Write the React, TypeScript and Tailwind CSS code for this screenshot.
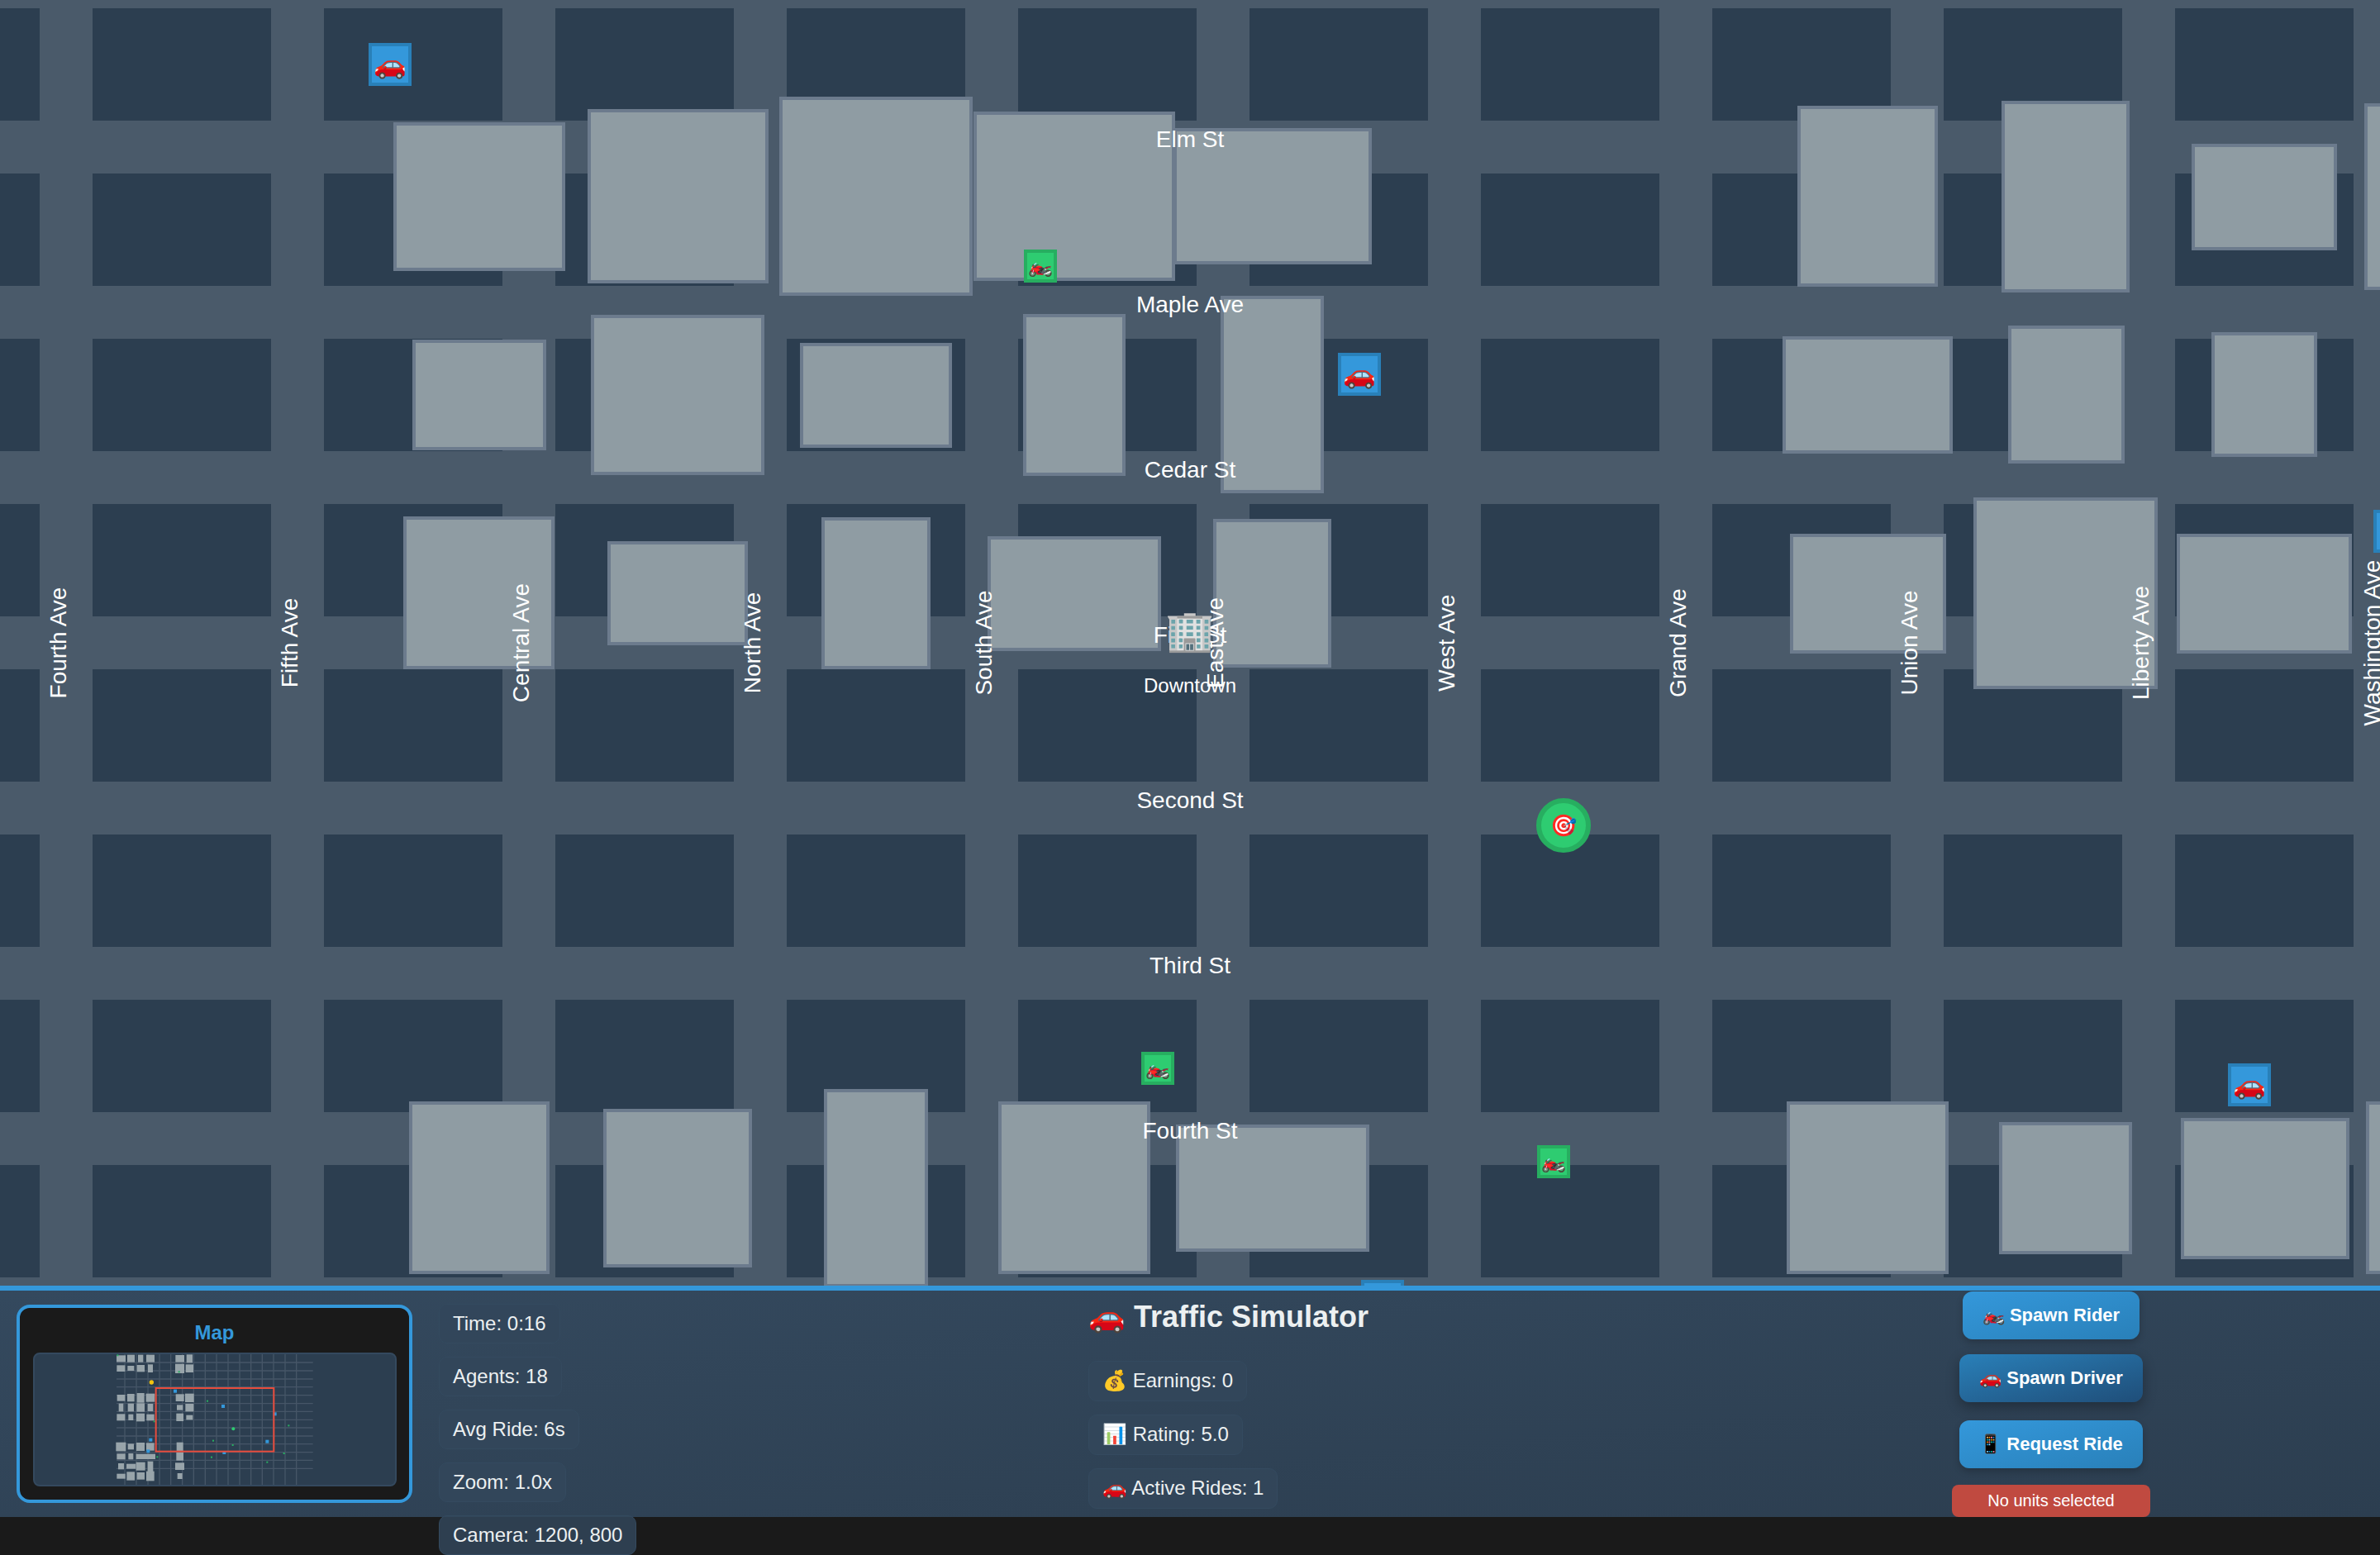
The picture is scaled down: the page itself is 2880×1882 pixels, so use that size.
import React from "react";

const cols = Array.from({ length: 11 });
const rows = Array.from({ length: 8 });

// [x, y, w, h]
const buildings: number[][] = [
  [476, 148, 208, 180], [711, 132, 219, 211], [943, 117, 234, 241], [1178, 135, 244, 205], [1420, 155, 240, 165],
  [2175, 128, 170, 219], [2422, 122, 155, 232], [2652, 174, 176, 129], [2861, 125, 180, 226],
  [499, 411, 162, 134], [715, 381, 210, 194], [968, 415, 184, 127], [1238, 380, 124, 196], [1477, 358, 125, 239],
  [2157, 407, 206, 142], [2430, 394, 141, 167], [2676, 402, 128, 151],
  [488, 625, 183, 185], [735, 655, 170, 126], [994, 626, 132, 184], [1195, 649, 210, 139], [1468, 628, 143, 180],
  [2166, 646, 189, 145], [2388, 602, 223, 232], [2634, 646, 212, 145],
  [495, 1333, 170, 209], [730, 1342, 180, 192], [997, 1318, 126, 240], [1208, 1333, 184, 209], [1423, 1361, 234, 154],
  [2162, 1333, 196, 209], [2419, 1358, 161, 160], [2639, 1353, 204, 171], [2863, 1333, 180, 209],
];

const hLabels: [string, number][] = [
  ["Elm St", 169], ["Maple Ave", 369], ["Cedar St", 569], ["First St", 769], ["Second St", 969], ["Third St", 1169], ["Fourth St", 1369],
];
const vLabels = ["Fourth Ave", "Fifth Ave", "Central Ave", "North Ave", "South Ave", "East Ave", "West Ave", "Grand Ave", "Union Ave", "Liberty Ave", "Washington Ave"];

const drivers = [[446, 52], [1619, 427], [2696, 1287], [2872, 617], [1647, 1549]];
const riders = [[1239, 302], [1381, 1273], [1860, 1386]];

const mmBuildings: number[][] = [
  [363,60,396,84],[402,58,429,85],[441,58,460,85],[471,58,501,85],[577,59,609,85],[617,57,639,87],
  [364,96,394,119],[403,98,427,116],[437,95,465,120],[477,93,495,122],[576,91,609,125],[614,93,642,122],
  [365,203,394,226],[402,200,428,228],[437,197,464,232],[470,199,502,229],[578,201,608,227],[612,199,644,230],
  [371,235,388,264],[404,235,426,264],[436,234,465,265],[476,236,496,263],[582,240,604,259],[613,236,643,264],
  [364,273,394,297],[406,274,424,296],[435,271,465,300],[472,274,500,297],[580,271,606,299],[616,277,640,294],
  [361,376,397,408],[404,381,426,402],[435,377,465,407],[471,378,500,406],[581,376,605,408],
  [364,417,395,438],[406,416,424,438],[434,418,468,437],[467,418,504,437],[580,412,606,442],
  [369,452,390,474],[399,454,433,472],[434,448,467,478],[476,445,496,482],[576,450,609,476],
  [364,490,395,508],[400,483,429,514],[437,485,465,511],[471,481,500,516],[584,488,602,509],
];
const mmH = [86,116,146,175,205,235,264,294,323,353,382,412,441,471];
const mmV = [393,435,477,519,560,602,643,685,726,768,810,851,892,933,975,1016];
const mmBlue = [[576,190],[750,245],[910,373],[487,367],[478,408],[938,273],[754,413]];
const mmGreen = [[367,60],[590,120],[693,226],[500,300],[988,315],[714,370],[785,386],[971,416],[511,429],[708,430],[910,448]];

function Minimap() {
  return (
    <svg viewBox="66 56 1308 474" className="block h-full w-full">
      {mmH.map((y) => <line key={y} x1="363" x2="1076" y1={y} y2={y} stroke="#465667" strokeWidth="4" />)}
      {mmV.map((x) => <line key={x} x1={x} x2={x} y1="56" y2="531" stroke="#465667" strokeWidth="4" />)}
      {mmBuildings.map((b, i) => <rect key={i} x={b[0]} y={b[1]} width={b[2] - b[0]} height={b[3] - b[1]} fill="#98a4aa" />)}
      {mmBlue.map((b, i) => <rect key={i} x={b[0] - 6} y={b[1] - 6} width="12" height="12" fill="#3498db" />)}
      {mmGreen.map((b, i) => <rect key={i} x={b[0] - 3} y={b[1] - 3} width="6" height="6" fill="#27ae60" />)}
      <circle cx="787" cy="327" r="6" fill="#2ecc71" />
      <circle cx="490" cy="158" r="8" fill="#f1c40f" />
      <rect x="506" y="179" width="428" height="230" fill="none" stroke="#e74c3c" strokeWidth="6" />
    </svg>
  );
}

function Chip({ children, className }: { children: React.ReactNode; className?: string }) {
  return (
    <div className={"flex w-fit items-center whitespace-nowrap rounded-[10px] border border-[#344a5f] bg-[rgba(50,70,90,0.85)] px-4 text-[24px] text-[#ecf0f1] " + (className ?? "")}>
      <span>{children}</span>
    </div>
  );
}

function Btn({ children, className }: { children: React.ReactNode; className?: string }) {
  return (
    <button className={"h-[58px] whitespace-nowrap rounded-[12px] px-6 pb-[1px] text-[22px] font-bold text-white " + (className ?? "")}>
      {children}
    </button>
  );
}

export default function App() {
  return (
    <div className="h-[1882px] w-[2880px] overflow-hidden bg-[#1a1a1a] [font-family:'Liberation_Sans',sans-serif]">
      {/* Map */}
      <div className="relative h-[1556px] overflow-hidden bg-[#4a5a6a]">
        <div className="ml-[-168px] mt-[10px] grid auto-rows-[136px] grid-cols-[repeat(11,216px)] gap-[64px]">
          {rows.map((_, r) => cols.map((_, c) => <div key={r + "-" + c} className="bg-[#2c3e50]" />))}
        </div>

        {buildings.map((b, i) => (
          <div key={i} className="absolute border-4 border-[#6c7b8d] bg-[#8f9ca3]" style={{ left: b[0], top: b[1], width: b[2], height: b[3] }} />
        ))}

        {hLabels.map(([t, y]) => (
          <div key={t} className="absolute left-[1440px] -translate-x-1/2 -translate-y-1/2 whitespace-nowrap text-[28px] text-white" style={{ top: y }}>{t}</div>
        ))}
        {vLabels.map((t, i) => (
          <div key={t} className="absolute top-[778px] -translate-x-1/2 -translate-y-1/2 -rotate-90 whitespace-nowrap text-[28px] text-white" style={{ left: 71 + i * 280 }}>{t}</div>
        ))}

        <div className="absolute left-[1440px] top-[764px] -translate-x-1/2 -translate-y-1/2 text-[48px] leading-none">🏢</div>
        <div className="absolute left-[1440px] top-[830px] -translate-x-1/2 -translate-y-1/2 whitespace-nowrap text-[24px] text-white">Downtown</div>

        <div className="absolute left-[1859px] top-[966px] flex h-[66px] w-[66px] items-center justify-center rounded-full border-[6px] border-[#27ae60] bg-[#2ecc71] text-[26px] leading-none">🎯</div>

        {drivers.map((d, i) => (
          <div key={i} className="absolute flex h-[52px] w-[52px] items-center justify-center border-4 border-[#2980b9] bg-[#3498db] text-[32px] leading-none" style={{ left: d[0], top: d[1] }}>🚗</div>
        ))}
        {riders.map((d, i) => (
          <div key={i} className="absolute flex h-[40px] w-[40px] items-center justify-center border-4 border-[#27ae60] bg-[#2ecc71] text-[24px] leading-none" style={{ left: d[0], top: d[1] }}>🏍️</div>
        ))}
      </div>

      {/* Panel */}
      <div className="relative flex h-[280px] items-start border-t-[6px] border-[#3498db] bg-gradient-to-br from-[#34495e] to-[#2c3e50] px-[20px]">
        <div className="mt-[17px] flex h-[240px] w-[479px] flex-col rounded-[16px] border-4 border-[#3498db] bg-[#1a1a1a] px-[16px]">
          <div className="mt-[16px] text-center text-[24px] leading-[28px] font-bold text-[#3498db]">Map</div>
          <div className="mt-[10px] h-[162px] w-[440px] overflow-hidden rounded-[8px] border-2 border-[#34495e] bg-[#2c3e50]">
            <Minimap />
          </div>
        </div>

        <div className="ml-[32px] mt-[16px] flex w-[239px] flex-col gap-4">
          <Chip className="h-12">Time: 0:16</Chip>
          <Chip className="h-12">Agents: 18</Chip>
          <Chip className="h-12">Avg Ride: 6s</Chip>
          <Chip className="h-12">Zoom: 1.0x</Chip>
          <Chip className="h-12">Camera: 1200, 800</Chip>
        </div>

        <div className="ml-[547px] mt-[11px] flex w-[340px] flex-col">
          <div className="whitespace-nowrap text-[36px] leading-[42px] font-bold text-[#ecf0f1]">🚗 Traffic Simulator</div>
          <div className="mt-[32px] flex flex-col gap-4">
            <Chip className="h-[49px] pb-[1px]">💰 Earnings: 0</Chip>
            <Chip className="h-[49px] pb-[1px]">📊 Rating: 5.0</Chip>
            <Chip className="h-[49px] pb-[1px]">🚗 Active Rides: 1</Chip>
          </div>
        </div>

        <div className="ml-[705px] mt-[1px] flex w-[240px] flex-col items-center gap-5">
          <Btn className="bg-gradient-to-br from-[#3498db] to-[#2980b9] shadow-[0_4px_8px_rgba(0,0,0,0.2)]">🏍️ Spawn Rider</Btn>
          <Btn className="-translate-y-[2px] bg-gradient-to-br from-[#2980b9] to-[#1f4e79] shadow-[0_6px_16px_rgba(0,0,0,0.3)]">🚗 Spawn Driver</Btn>
          <Btn className="bg-gradient-to-br from-[#3498db] to-[#2980b9] shadow-[0_4px_8px_rgba(0,0,0,0.2)]">📱 Request Ride</Btn>
          <div className="flex h-[39px] w-[240px] items-center justify-center rounded-[8px] bg-[#c04a40] pb-[2px] text-[20px] text-white">No units selected</div>
        </div>
      </div>
    </div>
  );
}
